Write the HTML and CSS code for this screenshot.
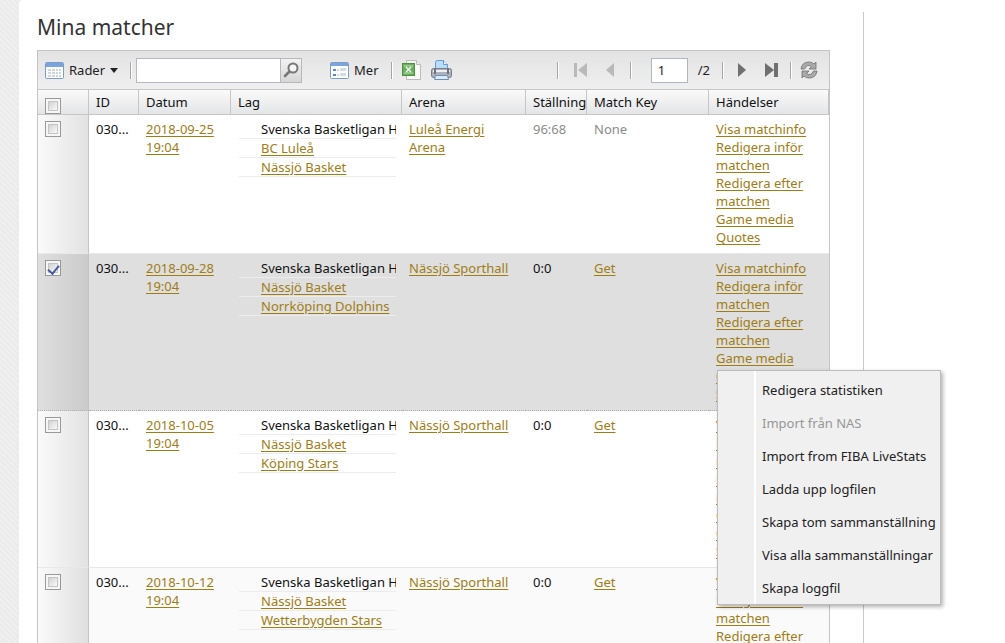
FILE: index.html
```html
<!DOCTYPE html>
<html lang="sv">
<head>
<meta charset="utf-8">
<title>Mina matcher</title>
<link rel="stylesheet" href="styles.css">
</head>
<body>
<div class="page">
<main class="content">
<h1 class="title">Mina matcher</h1>
<section class="grid">
<div class="toolbar">
  <button class="tool" type="button">
    <svg width="19" height="17" viewBox="0 0 19 17"><rect x=".5" y=".5" width="18" height="16" rx="1" fill="#fff" stroke="#7d9cc9"/><rect x="1" y="1" width="17" height="4" fill="#7ba3dc"/><path d="M3 7h3v2H3zM7 7h3v2H7zM11 7h2v2h-2zM14 7h2v2h-2zM3 10h3v2H3zM7 10h3v2H7zM11 10h2v2h-2zM14 10h2v2h-2zM3 13h3v2H3zM7 13h3v2H7zM11 13h2v2h-2zM14 13h2v2h-2z" fill="#cfd5dc"/></svg>
    <span>Rader</span>
    <svg width="8" height="5" viewBox="0 0 8 5"><path d="M0 0h8L4 5z" fill="#222"/></svg>
  </button>
  <span class="sep"></span>
  <form class="search">
    <input class="search-field" type="text" aria-label="Sök">
    <button class="search-button" type="button" aria-label="Sök">
      <svg width="18" height="18" viewBox="0 0 18 18"><circle cx="11" cy="7" r="4.5" fill="#f6f6f6" stroke="#777" stroke-width="2"/><path d="M7.5 10.5L3 15" stroke="#777" stroke-width="2.6" stroke-linecap="round"/></svg>
    </button>
  </form>
  <button class="tool more" type="button">
    <svg width="19" height="17" viewBox="0 0 19 17"><rect x=".5" y=".5" width="18" height="16" rx="1" fill="#fff" stroke="#7d9cc9"/><path d="M1 1h17v3H1z" fill="#7ba3dc"/><path d="M3 7h3v2H3zM3 12h3v2H3z" fill="#5c86c6"/><path d="M7 8h2M7 13h2" stroke="#9db6dd"/><path d="M10 6h6v3h-6zM10 11h6v3h-6z" fill="#d3dbe8"/></svg>
    <span>Mer</span>
  </button>
  <span class="sep"></span>
  <button class="icon" type="button" aria-label="Excel">
    <svg width="20" height="20" viewBox="0 0 20 20"><path d="M4.500.500h10l4 4v15h-14z" fill="#fafafa" stroke="#bbb"/><path d="M14.500.500v4h4" fill="#eee" stroke="#bbb"/><rect x=".5" y="3.500" width="12" height="12" fill="#6aae5e" stroke="#4a9340"/><path d="M2 6h9M2 13h9" stroke="#bfe0b6"/><path d="M4 7l5 5M9 7l-5 5" stroke="#e9f6e6" stroke-width="1.600"/></svg>
  </button>
  <button class="icon" type="button" aria-label="Skriv ut">
    <svg width="21" height="20" viewBox="0 0 21 20"><path d="M4.500 10V2.500q0-2 2-2h6l4 4V10z" fill="#b9dcf8" stroke="#5d9bd0"/><path d="M12.500.500v4h4" fill="#eef7ff" stroke="#5d9bd0"/><rect x=".5" y="8.500" width="20" height="9" rx="2" fill="#aeb1bc" stroke="#777c88"/><path d="M2 11h17" stroke="#eeeff3" stroke-width="2"/><path d="M4 9v5M17 9v5" stroke="#6d717c" stroke-width="2"/><path d="M4.500 15.500h12l1 4h-14z" fill="#d8ecfd" stroke="#6d8fb2"/></svg>
  </button>
  <nav class="pager">
    <span class="sep"></span>
    <button class="nav first" type="button" aria-label="Första sidan" disabled><svg width="14" height="14" viewBox="0 0 14 14"><path d="M0 0h3v14H0zM13 0v14L4 7z" fill="#b9b9b9"/></svg></button>
    <button class="nav prev" type="button" aria-label="Föregående sida" disabled><svg width="8" height="14" viewBox="0 0 8 14"><path d="M8 0v14L0 7z" fill="#b9b9b9"/></svg></button>
    <span class="sep"></span>
    <input class="page-field" type="text" value="1" aria-label="Sida">
    <span class="page-total">/2</span>
    <span class="sep"></span>
    <button class="nav next" type="button" aria-label="Nästa sida"><svg width="8" height="14" viewBox="0 0 8 14"><path d="M0 0v14l8-7z" fill="#707070"/></svg></button>
    <button class="nav last" type="button" aria-label="Sista sidan"><svg width="13" height="14" viewBox="0 0 13 14"><path d="M0 0v14l9-7zM9 0h4v14H9z" fill="#707070"/></svg></button>
    <span class="sep"></span>
    <button class="nav reload" type="button" aria-label="Uppdatera"><svg width="18" height="18" viewBox="0 0 18 18"><path d="M1 8Q2 1 9 1q3 0 5 2l2-2v7H9l2.500-2.500Q7 2.500 4.500 8z" fill="#aaa" stroke="#6f6f6f" stroke-width=".8"/><path d="M17 10q-1 7-8 7-3 0-5-2l-2 2v-7h7l-2.500 2.500Q11 15.500 13.500 10z" fill="#aaa" stroke="#6f6f6f" stroke-width=".8"/></svg></button>
  </nav>
</div>
<table class="matches">
<colgroup><col class="c-check"><col class="c-id"><col class="c-date"><col class="c-teams"><col class="c-arena"><col class="c-score"><col class="c-key"><col class="c-events"></colgroup>
<thead>
<tr><th class="check"><input type="checkbox" aria-label="Markera alla"></th><th>ID</th><th>Datum</th><th>Lag</th><th>Arena</th><th>Ställning</th><th>Match Key</th><th>Händelser</th></tr>
</thead>
<tbody>
<tr>
  <td class="check"><input type="checkbox" aria-label="Markera match"></td>
  <td>030...</td>
  <td><a href="#">2018-09-25 19:04</a></td>
  <td><ul class="teams"><li>Svenska Basketligan Herr</li><li><a href="#">BC Luleå</a></li><li><a href="#">Nässjö Basket</a></li></ul></td>
  <td><a href="#">Luleå Energi Arena</a></td>
  <td class="muted">96:68</td>
  <td class="muted">None</td>
  <td><ul class="events"><li><a href="#">Visa matchinfo</a></li><li><a href="#">Redigera inför matchen</a></li><li><a href="#">Redigera efter matchen</a></li><li><a href="#">Game media</a></li><li><a href="#">Quotes</a></li></ul></td>
</tr>
<tr class="selected">
  <td class="check"><input type="checkbox" aria-label="Markera match" checked></td>
  <td>030...</td>
  <td><a href="#">2018-09-28 19:04</a></td>
  <td><ul class="teams"><li>Svenska Basketligan Herr</li><li><a href="#">Nässjö Basket</a></li><li><a href="#">Norrköping Dolphins</a></li></ul></td>
  <td><a href="#">Nässjö Sporthall</a></td>
  <td>0:0</td>
  <td><a href="#">Get</a></td>
  <td><ul class="events"><li><a href="#">Visa matchinfo</a></li><li><a href="#">Redigera inför matchen</a></li><li><a href="#">Redigera efter matchen</a></li><li><a href="#">Game media</a></li><li><a href="#">Quotes</a></li>
    <li class="anchor"><a href="#">Statistik</a>
      <div class="menu" role="menu">
        <button type="button" role="menuitem">Redigera statistiken</button>
        <button type="button" role="menuitem" disabled>Import från NAS</button>
        <button type="button" role="menuitem">Import from FIBA LiveStats</button>
        <button type="button" role="menuitem">Ladda upp logfilen</button>
        <button type="button" role="menuitem">Skapa tom sammanställning</button>
        <button type="button" role="menuitem">Visa alla sammanställningar</button>
        <button type="button" role="menuitem">Skapa loggfil</button>
      </div>
    </li></ul></td>
</tr>
<tr>
  <td class="check"><input type="checkbox" aria-label="Markera match"></td>
  <td>030...</td>
  <td><a href="#">2018-10-05 19:04</a></td>
  <td><ul class="teams"><li>Svenska Basketligan Herr</li><li><a href="#">Nässjö Basket</a></li><li><a href="#">Köping Stars</a></li></ul></td>
  <td><a href="#">Nässjö Sporthall</a></td>
  <td>0:0</td>
  <td><a href="#">Get</a></td>
  <td><ul class="events"><li><a href="#">Visa matchinfo</a></li><li><a href="#">Redigera inför matchen</a></li><li><a href="#">Redigera efter matchen</a></li><li><a href="#">Game media</a></li><li><a href="#">Quotes</a></li><li><a href="#">Statistik</a></li></ul></td>
</tr>
<tr class="alt">
  <td class="check"><input type="checkbox" aria-label="Markera match"></td>
  <td>030...</td>
  <td><a href="#">2018-10-12 19:04</a></td>
  <td><ul class="teams"><li>Svenska Basketligan Herr</li><li><a href="#">Nässjö Basket</a></li><li><a href="#">Wetterbygden Stars</a></li></ul></td>
  <td><a href="#">Nässjö Sporthall</a></td>
  <td>0:0</td>
  <td><a href="#">Get</a></td>
  <td><ul class="events"><li><a href="#">Visa matchinfo</a></li><li><a href="#">Redigera inför matchen</a></li><li><a href="#">Redigera efter matchen</a></li></ul></td>
</tr>
</tbody>
</table>
</section>
</main>
<aside class="side"></aside>
</div>
</body>
</html>
```
FILE: styles.css
```css
* { box-sizing: border-box; }
body {
  margin: 0;
  font: 13px/18px "Noto Sans", "Open Sans", sans-serif;
  color: #111;
  background-color: #ededed;
  background-image: repeating-linear-gradient(45deg, #ebebeb 0 2px, #efefef 2px 4px);
}
button, input { font: inherit; color: inherit; margin: 0; }
button { border: 0; padding: 0; background: none; }
ul { list-style: none; margin: 0; padding: 0; }
a { color: #a07d14; text-underline-offset: 2px; }
svg { display: block; }

.page {
  display: flex;
  min-height: 100vh;
  margin-left: 19px;
  background: #fff;
  border-top-left-radius: 4px;
}
.content { flex: 1; min-width: 0; padding: 12px 33px 0 18px; }
.side { width: 142px; margin-top: 12px; border-left: 1px solid #c9c9c9; }
.title {
  margin: 0 0 8px;
  font-size: 21px;
  line-height: 30px;
  font-weight: 400;
  color: #333;
}
.grid { border: 1px solid #c4c4c4; border-bottom: 0; }

.toolbar {
  display: flex;
  align-items: center;
  height: 38px;
  padding: 0 11px 0 7px;
  background: linear-gradient(#e3e3e3, #efefef);
  color: #222;
}
.tool { display: flex; align-items: center; gap: 5px; margin-right: 12px; }
.more { margin-left: 28px; }
.sep { width: 2px; height: 17px; border-left: 1px solid #a6a6a6; background: #fff; }
.search { display: flex; margin-left: 4px; }
.search-field {
  width: 145px;
  height: 25px;
  padding: 0 6px;
  border: 1px solid #b5b8c0;
  background: #fff;
}
.search-button {
  display: grid;
  place-items: center;
  width: 21px;
  height: 25px;
  border: 1px solid #b8b8b8;
  border-left: 0;
  background: linear-gradient(#f2f2f2, #d6d6d6);
}
.icon { margin-left: 9px; }
.pager { display: flex; align-items: center; margin-left: auto; }
.first { margin-left: 15px; }
.prev { margin: 0 16px 0 18px; }
.page-field {
  width: 37px;
  height: 25px;
  margin-left: 19px;
  padding: 0 6px;
  border: 1px solid #b0b6c4;
  background: #fff;
}
.page-total { margin: 0 12px 0 10px; }
.next { margin-left: 14px; }
.last { margin: 0 12px 0 19px; }
.reload { margin-left: 8px; }

.matches { width: 100%; table-layout: fixed; border-collapse: separate; border-spacing: 0; }
.c-check { width: 51px; }
.c-id { width: 50px; }
.c-date { width: 92px; }
.c-teams { width: 171px; }
.c-arena { width: 124px; }
.c-score { width: 61px; }
.c-key { width: 122px; }
th {
  height: 26px;
  padding: 0 0 0 7px;
  border: 1px solid #c6c6c6;
  border-left: 0;
  background: linear-gradient(#fafafa, #e4e5e7);
  font-weight: 400;
  text-align: left;
  white-space: nowrap;
}
td { padding: 5px 6px 7px 7px; border-bottom: 1px solid #e8e8e8; background: #fff; vertical-align: top; }
td.check { padding-top: 6px; border-right: 1px solid #c4c4c4; background: linear-gradient(90deg, #fafafa, #e2e2e2); }
th.check { vertical-align: bottom; }
.alt td { background: #fafafa; }
.alt td.check { background: linear-gradient(90deg, #fafafa, #dfdfdf); }
.selected td { background: #dfdfdf; border-bottom: 1px dotted #b0b0b0; }
.selected td.check { background: linear-gradient(90deg, #dfdfdf, #cbcbcb); }
.muted { color: #8c8c8c; }

input[type="checkbox"] {
  display: block;
  appearance: none;
  width: 16px;
  height: 16px;
  padding: 2px;
  border: 1px solid #999;
  outline: 1px solid #c4c4c4;
  outline-offset: -4px;
  background: linear-gradient(135deg, #ccc, #fff) content-box, #f6f6f6;
}
input[type="checkbox"]:checked {
  display: grid;
  place-items: center;
}
input[type="checkbox"]:checked::before {
  content: "";
  width: 5px;
  height: 9px;
  border: solid #4458a5;
  border-width: 0 2px 2px 0;
  transform: rotate(40deg);
}

.teams { margin-left: 1px; }
.teams li {
  padding-left: 22px;
  border-bottom: 1px solid #ececec;
  white-space: nowrap;
  overflow: hidden;
}

.anchor { position: relative; }
.menu {
  position: absolute;
  top: -15px;
  left: 1px;
  z-index: 2;
  width: 224px;
  padding: 2px 1px 0;
  border: 1px solid #bcbcbc;
  background: linear-gradient(#fff, #fff) 36px 0 / 2px 100% no-repeat #f0f0f0;
  box-shadow: 2px 2px 4px rgba(0, 0, 0, 0.3);
}
.menu button {
  display: block;
  width: 100%;
  height: 33px;
  padding-left: 43px;
  text-align: left;
  white-space: nowrap;
  color: #222;
}
.menu button:disabled { color: #979797; }
```
